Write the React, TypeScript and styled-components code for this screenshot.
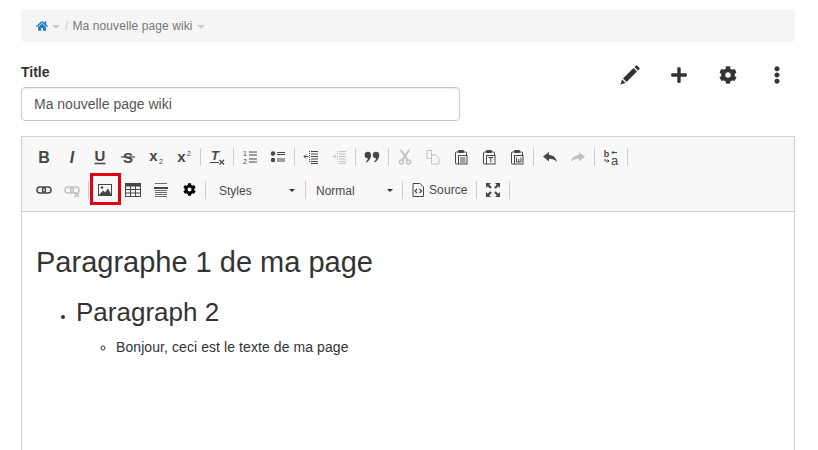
import React from 'react';
import styled, { createGlobalStyle } from 'styled-components';
import { FaHome, FaPlus, FaCog, FaEllipsisV } from 'react-icons/fa';

const GlobalStyle = createGlobalStyle`
  html, body {
    margin: 0;
    padding: 0;
    background: #fff;
    font-family: "Liberation Sans", Arial, sans-serif;
    color: #333;
    overflow: hidden;
  }
  * { box-sizing: border-box; }
`;

const Page = styled.div`
  width: 818px;
  height: 450px;
  padding: 10px 23px 0 21px;
  overflow: hidden;
`;

const Breadcrumb = styled.nav`
  height: 32px;
  background: #f5f5f5;
  border-radius: 4px;
  display: flex;
  align-items: center;
  padding-left: 15px;
  font-size: 12px;
  letter-spacing: 0.1px;
  color: #777;
`;

const Caret = styled.span`
  width: 0;
  height: 0;
  margin: 1px 0 0 4px;
  border-left: 4px solid transparent;
  border-right: 4px solid transparent;
  border-top: 4px solid #ccc;
`;

const CrumbSep = styled.span`
  color: #ccc;
  margin: 0 4px 0 5px;
`;

const HeaderRow = styled.div`
  display: flex;
  justify-content: space-between;
  margin-top: 23px;
`;

const TitleField = styled.div`
  width: 439px;
`;

const Label = styled.label`
  display: block;
  font-size: 14px;
  font-weight: bold;
  line-height: 15px;
  margin-bottom: 7px;
`;

const TitleInput = styled.input`
  display: block;
  width: 100%;
  height: 34px;
  border: 1px solid #ccc;
  border-radius: 4px;
  padding: 0 12px;
  font: 14px "Liberation Sans", Arial, sans-serif;
  color: #555;
  box-shadow: inset 0 1px 1px rgba(0, 0, 0, 0.075);
`;

const Actions = styled.div`
  display: flex;
  align-items: flex-start;
  height: 24px;
  padding-right: 8px;
  gap: 29px;
`;

const ActionIcon = styled.button`
  width: 20px;
  height: 20px;
  padding: 0;
  border: 0;
  background: none;
  color: #333;
  font-size: 18px;
  display: flex;
  align-items: center;
  justify-content: center;
`;

const Editor = styled.div`
  margin-top: 15px;
  height: 400px;
  border: 1px solid #d1d1d1;
`;

const Toolbar = styled.div`
  height: 75px;
  padding: 3px 0 0 8px;
  background: #f8f8f8;
  border-bottom: 1px solid #d1d1d1;
`;

const ToolRow = styled.div`
  display: flex;
  align-items: center;
  height: 33px;
`;

const ToolButton = styled.button<{ $off?: boolean; $marked?: boolean; $tone?: string }>`
  position: relative;
  flex: none;
  width: 28px;
  height: 24px;
  padding: 0;
  border: 0;
  background: none;
  color: ${p => p.$tone || '#474747'};
  display: flex;
  align-items: center;
  justify-content: center;
  font-size: 14px;

  & > svg {
    opacity: ${p => (p.$off ? 0.3 : 1)};
    overflow: visible;
  }

  ${p => p.$marked && `
    &::after {
      content: '';
      position: absolute;
      box-sizing: border-box;
      left: -1px;
      top: -5px;
      width: 31px;
      height: 32px;
      border: 3px solid #e3000f;
    }
  `}
`;

const Sep = styled.span`
  flex: none;
  width: 1px;
  height: 18px;
  margin: 0 2px;
  background: #cdcdcd;
`;

const Combo = styled.div<{ $w: number; $left: number; $right: number }>`
  flex: none;
  width: ${p => p.$w}px;
  display: flex;
  align-items: center;
  justify-content: space-between;
  padding: 2px ${p => p.$right}px 0 ${p => p.$left}px;
  font-size: 12px;
  color: #484848;
`;

const ComboCaret = styled.span`
  width: 0;
  height: 0;
  border-left: 3px solid transparent;
  border-right: 3px solid transparent;
  border-top: 3px solid #2f2f2f;
`;

const SourceButton = styled.button`
  flex: none;
  display: flex;
  align-items: center;
  gap: 3px;
  height: 24px;
  padding: 1px 6px 0 5px;
  border: 0;
  background: none;
  font: 12px "Liberation Sans", Arial, sans-serif;
  letter-spacing: 0.1px;
  color: #484848;
`;

const Content = styled.div`
  padding: 33px 14px 0;
`;

const Heading = styled.h1`
  margin: 0;
  font-size: 29px;
  font-weight: normal;
  line-height: 34px;
  color: #333;
`;

const Level2 = styled.ul`
  margin: 16px 0 0;
  padding-left: 40px;
  font-size: 14px;
`;

const Level2Text = styled.span`
  font-size: 26px;
  line-height: 34px;
`;

const Level3 = styled.ul`
  margin: 8px 0 0;
  padding-left: 40px;
  font-size: 14px;
  line-height: 20px;
  letter-spacing: 0.08px;
  list-style: circle;
`;

// small 16x16 toolbar drawings, letters stay real text
const Ico: React.FC<{ children: React.ReactNode }> = ({ children }) => (
  <svg width="16" height="16" viewBox="0 0 16 16" fill="none" stroke="currentColor" strokeWidth="1">
    {children}
  </svg>
);

const Letter: React.FC<{ x?: number; y?: number; size?: number; bold?: boolean; italic?: boolean; children: React.ReactNode }> = ({
  x = 8, y = 13.5, size = 16, bold = true, italic, children,
}) => (
  <text
    x={x}
    y={y}
    fontSize={size}
    fontFamily="Liberation Sans, Arial, sans-serif"
    fontWeight={bold ? 'bold' : 'normal'}
    fontStyle={italic ? 'italic' : 'normal'}
    textAnchor="middle"
    fill="currentColor"
    stroke="none"
  >
    {children}
  </text>
);

const Clipboard: React.FC<{ mark: string }> = ({ mark }) => (
  <Ico>
    <path d="M5 3H3.500Q2.500 3 2.500 4V14Q2.500 15 3.500 15H5" />
    <path d="M11 3H12.500Q13.500 3 13.500 4V6" />
    <rect x="5" y="1" width="6" height="3" rx="1" fill="currentColor" stroke="none" />
    <rect x="5.500" y="6.500" width="8.500" height="8.500" />
    {mark === 'list' && <path d="M7 9h5.500M7 11h5.500M7 13h5.500" />}
    {mark === 'T' && <path d="M7.500 8.500h4.500M9.800 8.500v5" />}
    {mark === 'W' && <path d="M7.500 8.500v4.500h4.500v-4.500M9.800 10v3" />}
  </Ico>
);

const Indent: React.FC<{ out?: boolean }> = ({ out }) => (
  <Ico>
    <path d="M8 2.500h7M8 5h7M8 7.500h7M8 10h7M8 12.500h7" />
    <path d="M6.500 2v12" strokeDasharray="1 1" />
    {out ? <path d="M5.500 7.500H1M3 5.500L1 7.500l2 2" /> : <path d="M1 7.500h4M3.500 5.500L5.500 7.500l-2 2" />}
    <path d="M8 14.500h7" />
  </Ico>
);

const ChainLink: React.FC = () => (
  <>
    <rect x="1" y="5" width="8.500" height="6" rx="3" strokeWidth="1.500" />
    <rect x="6.500" y="5" width="8.500" height="6" rx="3" strokeWidth="1.500" />
  </>
);

const App: React.FC = () => (
  <>
    <GlobalStyle />
    <Page>
      <Breadcrumb>
        <FaHome size={12} color="#1c7fc7" />
        <Caret />
        <CrumbSep>/</CrumbSep>
        Ma nouvelle page wiki
        <Caret />
      </Breadcrumb>

      <HeaderRow>
        <TitleField>
          <Label>Title</Label>
          <TitleInput readOnly value="Ma nouvelle page wiki" />
        </TitleField>
        <Actions>
          <ActionIcon>
            <svg width="20" height="20" viewBox="0 0 20 20" fill="currentColor">
              <path d="M0.500 19.500L2 14.500L5.500 18Z" />
              <path d="M3 13.500L13.500 3L17 6.500L6.500 17Z" />
              <path d="M14.500 2L16 0.500Q16.500 0 17 0.500L19.500 3Q20 3.500 19.500 4L18 5.500Z" />
            </svg>
          </ActionIcon>
          <ActionIcon><FaPlus /></ActionIcon>
          <ActionIcon><FaCog /></ActionIcon>
          <ActionIcon><FaEllipsisV /></ActionIcon>
        </Actions>
      </HeaderRow>

      <Editor>
        <Toolbar>
          <ToolRow>
            <ToolButton><Ico><Letter>B</Letter></Ico></ToolButton>
            <ToolButton><Ico><Letter italic>I</Letter></Ico></ToolButton>
            <ToolButton><Ico><Letter y={12} size={15}>U</Letter><path d="M2.500 14.500h11" strokeWidth="1.500" /></Ico></ToolButton>
            <ToolButton><Ico><Letter size={15}>S</Letter><path d="M1 8h14" strokeWidth="1.200" /></Ico></ToolButton>
            <ToolButton><Ico><Letter x={5.500} y={12} size={15}>x</Letter><Letter x={13} y={14.500} size={7} bold={false}>2</Letter></Ico></ToolButton>
            <ToolButton><Ico><Letter x={5.500} y={13} size={15}>x</Letter><Letter x={13} y={7} size={7} bold={false}>2</Letter></Ico></ToolButton>
            <Sep />
            <ToolButton><Ico><Letter x={6} y={11} size={13} italic>T</Letter><path d="M1 13.500h9" /><path d="M10.500 11l4.500 4.500M15 11l-4.500 4.500" strokeWidth="1.300" /></Ico></ToolButton>
            <Sep />
            <ToolButton>
              <Ico>
                <Letter x={3} y={7} size={7} bold={false}>1</Letter>
                <Letter x={3} y={14.500} size={7} bold={false}>2</Letter>
                <path d="M7 3h8M7 6h8M7 10h8M7 13h8" strokeWidth="1.200" />
              </Ico>
            </ToolButton>
            <ToolButton>
              <Ico>
                <circle cx="3" cy="4.500" r="2.200" fill="currentColor" stroke="none" />
                <circle cx="3" cy="11" r="2.200" fill="currentColor" stroke="none" />
                <path d="M7 3.500h8M7 5.500h8M7 10h8M7 12h8" />
              </Ico>
            </ToolButton>
            <Sep />
            <ToolButton><Indent out /></ToolButton>
            <ToolButton $off><Indent /></ToolButton>
            <Sep />
            <ToolButton>
              <Ico>
                <circle cx="3.800" cy="6" r="3.200" fill="currentColor" stroke="none" />
                <path d="M7 6C7 9 5.500 12 2.500 13.500L2 12.500C3.500 11 4 10 4 8Z" fill="currentColor" stroke="none" />
                <circle cx="12" cy="6" r="3.200" fill="currentColor" stroke="none" />
                <path d="M15.200 6C15.200 9 13.700 12 10.700 13.500L10.200 12.500C11.700 11 12.200 10 12.200 8Z" fill="currentColor" stroke="none" />
              </Ico>
            </ToolButton>
            <Sep />
            <ToolButton $off>
              <Ico>
                <circle cx="4.500" cy="13" r="2" strokeWidth="1.500" />
                <circle cx="11.500" cy="13" r="2" strokeWidth="1.500" />
                <path d="M5.500 11L12 1M10.500 11L4 1" strokeWidth="2" />
              </Ico>
            </ToolButton>
            <ToolButton $off>
              <Ico>
                <path d="M6.500 6V1.500H2V9.500H6" />
                <path d="M6.500 6H10.500L14 9.500V15H6.500Z" />
              </Ico>
            </ToolButton>
            <ToolButton><Clipboard mark="list" /></ToolButton>
            <ToolButton><Clipboard mark="T" /></ToolButton>
            <ToolButton><Clipboard mark="W" /></ToolButton>
            <Sep />
            <ToolButton>
              <Ico><path d="M1 7.500L7 3V6C11 6 14 8.500 15 13C13 10.800 10.500 9.800 7 9.800V12.500Z" fill="currentColor" stroke="none" /></Ico>
            </ToolButton>
            <ToolButton $off>
              <Ico><path d="M15 7.500L9 3V6C5 6 2 8.500 1 13C3 10.800 5.500 9.800 9 9.800V12.500Z" fill="currentColor" stroke="none" /></Ico>
            </ToolButton>
            <Sep />
            <ToolButton>
              <Ico>
                <Letter x={3.500} y={7.500} size={9}>b</Letter>
                <Letter x={11.500} y={15.500} size={13} bold={false}>a</Letter>
                <path d="M9 3.500h5M10.500 2L9 3.500 10.500 5M2 10v2h4M4.500 10.500L6 12l-1.500 1.500" />
              </Ico>
            </ToolButton>
            <Sep />
          </ToolRow>

          <ToolRow>
            <ToolButton><Ico><ChainLink /></Ico></ToolButton>
            <ToolButton $off>
              <Ico>
                <ChainLink />
                <path d="M10.500 10.500l4.500 4.500M15 10.500l-4.500 4.500" strokeWidth="1.500" />
              </Ico>
            </ToolButton>
            <Sep />
            <ToolButton $marked>
              <Ico>
                <rect x="1.500" y="2.500" width="13" height="11" />
                <circle cx="5" cy="5.500" r="1.300" fill="currentColor" stroke="none" />
                <path d="M2 13L6 8.500l2 2 3-4 3.500 6.500Z" fill="currentColor" stroke="none" />
              </Ico>
            </ToolButton>
            <ToolButton>
              <Ico>
                <rect x="0.500" y="1.500" width="15" height="13" />
                <path d="M0.500 3h15" strokeWidth="3" />
                <path d="M0.500 7.500h15M0.500 11h15M5.500 3v11M10.500 3v11" />
              </Ico>
            </ToolButton>
            <ToolButton>
              <Ico>
                <path d="M2 1.500h12M2 10.500h12M2 12.500h12M2 14.500h12" strokeWidth="0.800" />
                <path d="M1 6h14" strokeWidth="2" />
                <path d="M2 8.500h12" strokeWidth="0.800" />
              </Ico>
            </ToolButton>
            <ToolButton $tone="#000"><FaCog size={13} /></ToolButton>
            <Sep />
            <Combo $w={95} $left={11} $right={8}>Styles<ComboCaret /></Combo>
            <Sep />
            <Combo $w={92} $left={8} $right={7}>Normal<ComboCaret /></Combo>
            <Sep />
            <SourceButton>
              <Ico>
                <path d="M3 1.500H10L13.500 5V14.500H3Z" />
                <path d="M7 7L5 9l2 2M9.500 7l2 2-2 2" strokeWidth="1.200" />
              </Ico>
              Source
            </SourceButton>
            <Sep />
            <ToolButton>
              <Ico>
                <path d="M1 1h5L4.300 2.700 6.800 5.200 5.200 6.800 2.700 4.300 1 6Z" fill="currentColor" stroke="none" />
                <path d="M15 1h-5l1.700 1.700L9.200 5.200 10.800 6.800 13.300 4.300 15 6Z" fill="currentColor" stroke="none" />
                <path d="M1 15h5l-1.700-1.700 2.500-2.500-1.600-1.600-2.500 2.500L1 10Z" fill="currentColor" stroke="none" />
                <path d="M15 15h-5l1.700-1.700-2.500-2.500 1.600-1.600 2.500 2.500L15 10Z" fill="currentColor" stroke="none" />
              </Ico>
            </ToolButton>
            <Sep />
          </ToolRow>
        </Toolbar>

        <Content>
          <Heading>Paragraphe 1 de ma page</Heading>
          <Level2>
            <li>
              <Level2Text>Paragraph 2</Level2Text>
              <Level3>
                <li>Bonjour, ceci est le texte de ma page</li>
              </Level3>
            </li>
          </Level2>
        </Content>
      </Editor>
    </Page>
  </>
);

export default App;
